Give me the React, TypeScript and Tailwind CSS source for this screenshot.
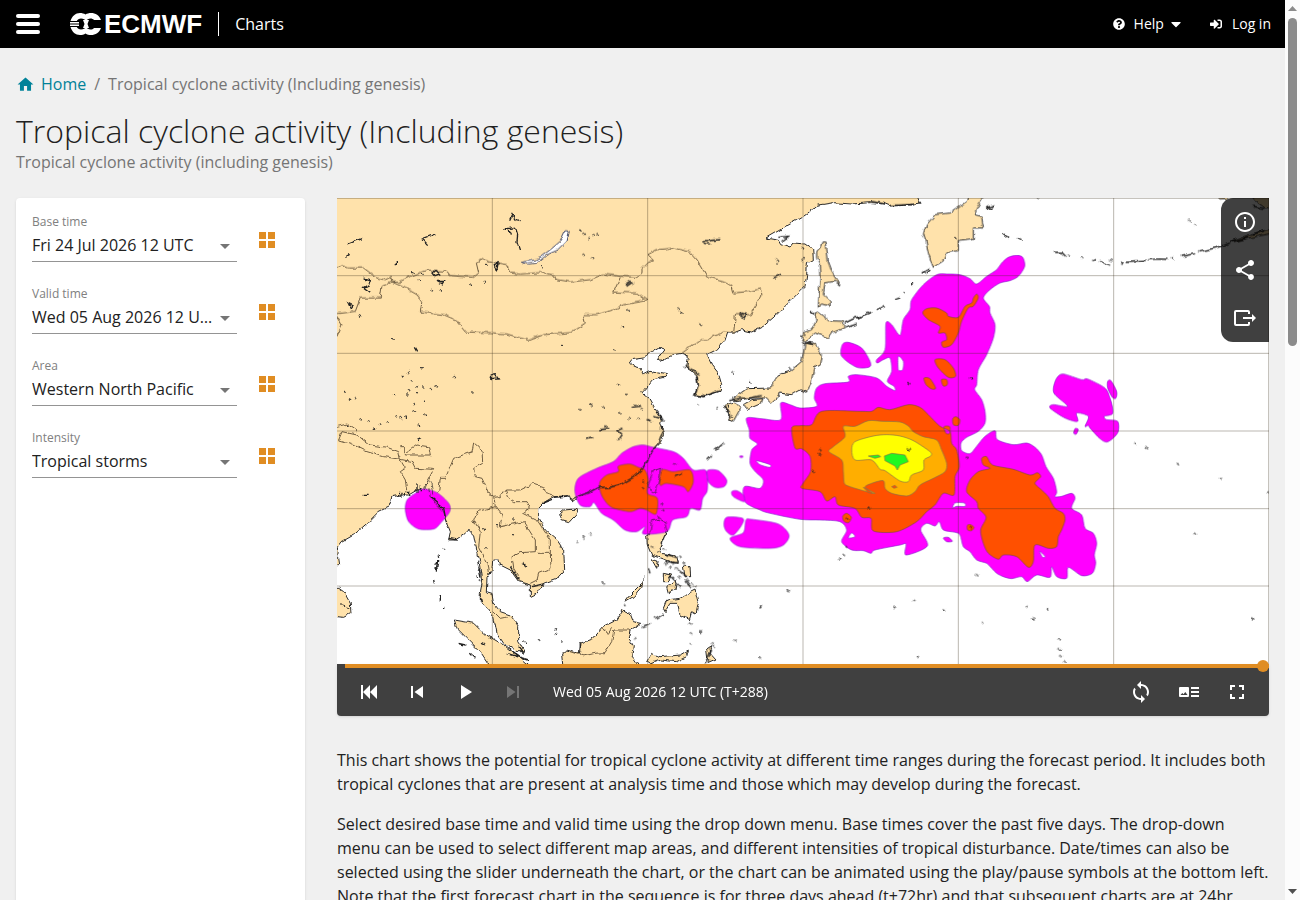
import { useState } from "react";
import { MdHome, MdLoop, MdFullscreen, MdOutlineInfo, MdPlayArrow, MdShare, MdSkipNext, MdSkipPrevious } from "react-icons/md";
import { FaCaretDown, FaQuestionCircle, FaSignInAlt } from "react-icons/fa";

type Field = {
  id: string;
  label: string;
  options: string[];
}

const fields: Field[] = [
  { id: "base-time", label: "Base time", options: ["Fri 24 Jul 2026 12 UTC"] },
  { id: "valid-time", label: "Valid time", options: ["Wed 05 Aug 2026 12 UTC"] },
  { id: "area", label: "Area", options: ["Western North Pacific"] },
  { id: "intensity", label: "Intensity", options: ["Tropical storms"] },
];

// the map is drawn on a 2796 x 1398 canvas, split in tiles that start at these points
const tiles = {
  nw: "translate(0 0)",
  n: "translate(699 0)",
  ne: "translate(1389 0)",
  e: "translate(2094 0)",
  sw: "translate(0 696)",
  s: "translate(699 696)",
  se: "translate(1389 696)",
  fe: "translate(2094 696)",
};

const mainland =
  "M-30 -30H1732L1750 15 1700 22 1660 24 1640 16 1600 14 1545 18 1490 14 1440 22 1404 52 1339 90 1287 120 1324 127 1331 140 1359 150 1371 135 1404 138 1427 155 1429 185 1411 195 1409 230 1404 265 1389 280 1359 310 1319 350 1279 385 1244 402 1214 395 1189 405 1169 405 1161 430 1139 455 1109 470 1124 500 1144 525 1154 560 1149 580 1099 595 1074 590 1084 560 1079 530 1049 510 1054 475 1034 466 1009 470 969 490 961 485 984 455 969 445 944 460 919 480 884 485 877 495 889 505 909 510 919 530 939 520 989 530 984 538 949 545 924 575 914 585 939 605 959 640 974 660 971 680 984 700 969 736 949 756 929 796 909 821 879 841 849 861 789 876 759 881 719 901 705 912 697 893 650 896 625 911 605 931 605 961 625 996 660 1026 680 1056 683 1116 660 1141 620 1156 600 1186 580 1196 580 1161 545 1151 520 1116 490 1101 485 1086 467 1086 465 1116 450 1141 448 1181 465 1186 470 1216 490 1241 520 1251 545 1286 545 1331 565 1361 540 1361 500 1336 480 1306 470 1256 450 1231 430 1211 430 1186 437 1146 430 1096 415 1036 410 1011 395 996 385 1006 355 1026 335 1026 340 1001 330 976 320 946 290 911 275 881 265 871 240 876 215 891 190 891 165 896 155 926 125 941 90 976 50 1011 15 1031 5 1046 2 1080 5 1100 -30 1112Z";

const land = [
  { at: tiles.ne, d: "M50 160L60 150 66 132 78 132 85 190 100 230 120 262 105 250 75 255 70 290 90 310 90 325 65 318 55 325 60 240 58 200 50 180ZM45 345L55 342 90 368 130 370 132 390 95 405 85 420 45 405 20 430 8 425 8 405 35 395 48 370ZM370 105L380 80 405 50 450 45 500 10 510 -20H560L530 30 525 50 545 55 550 90 520 90 520 125 475 130 475 158 440 165 435 185 400 208 395 195 385 165 378 130Z" },
  { at: tiles.n, d: "M705 435H735L754 470 749 500 732 510 722 560 709 583 690 575 665 590 628 585 622 600 605 615 590 600 540 600 500 608 485 605 530 572 600 570 625 530 660 520 695 490 700 470ZM520 620L545 605 575 602 570 618 530 635ZM465 620L495 612 512 630 490 670 475 665 478 640 460 630Z" },
  { at: tiles.e, d: "M640 -20H740V25L690 30 670 15ZM585 130L620 118 650 108 720 90V105L640 120 600 130ZM540 -10L555 3 575 2 590 -10Z" },
  { at: tiles.s, d: "M230 320L240 312 245 272 265 268 285 275 290 300 285 315 270 350 275 370 320 378 325 400 300 395 245 375 232 345ZM245 388L265 395 260 415ZM280 430L305 435 290 455 280 455ZM290 470L320 450 315 480 295 488ZM340 408L360 410 362 440 345 440ZM280 535L290 510 330 505 355 490 375 480 385 520 378 552 365 545 358 570 330 555 322 520 300 520 285 545ZM165 515L180 495 215 460 225 440 215 470 190 500ZM-25 675L-10 660 25 670 30 640 70 625 100 590 140 570 160 540 180 550 190 575 215 580 180 600 175 625 190 650 185 680 215 720H-20ZM230 695L245 670 270 680 330 675 355 660 350 680 320 695 270 690 240 702ZM410 660L425 650 420 670 438 690 415 700Z" },
  { at: tiles.sw, d: "M352 570L410 580 440 610 500 645 545 680 590 720H465L455 702 430 665 390 625 360 595ZM668 250L680 240 705 238 720 238 723 248 695 278 675 272ZM-20 475H5L20 485 40 520 42 550 20 562 -20 558Z" },
];

// outlines that stay visible through the shaded areas
const outlines = [
  { at: tiles.s, d: "M235 165L250 120 275 112 270 140 255 190 235 175ZM230 320L240 312 245 272 265 268 285 275 290 300 285 315 270 350" },
  { at: tiles.sw, d: "M275 175L280 200 295 220 320 245 330 280M262 178L272 150 285 160 290 190" },
];

// shaded areas: rings of points, drawn as smooth closed curves
const magenta = [
  { at: tiles.ne, d: "M410 230L440 228 480 230 510 242 530 258 560 235 590 215 605 195 625 178 650 172 668 178 674 205 655 235 630 248 600 255 570 275 550 300 568 325 570 345 585 380 580 420 560 470 535 515 530 560 524 575 545 605 555 640 555 675 535 700 500 718 483 735 485 758 510 767 530 745 555 715 585 698 592 725 640 740 680 735 705 748 725 771 738 806 760 841 770 881 765 896 785 895 815 886 825 901 815 931 845 951 855 991 880 1006 890 1036 883 1071 887 1096 877 1126 845 1133 805 1108 800 1141 770 1136 755 1106 750 1138 710 1131 682 1151 665 1136 635 1142 610 1136 590 1126 575 1111 560 1096 530 1086 510 1061 490 1046 480 1011 465 1003 430 996 418 971 405 984 380 976 362 996 382 1044 318 1071 318 1038 300 1041 225 1056 213 1066 190 1058 155 1056 125 1031 140 996 120 971 60 966 0 964 -90 946 -120 936 -165 912 -167 866 -120 871 -110 846 -135 820 -150 796 -145 756 -128 738 -150 721 -152 696 -160 660 -115 662 -58 665 -58 615 -30 620 0 630 50 625 43 600 50 570 75 557 145 552 145 535 170 530 230 540 260 565 285 578 282 565 262 550 275 520 270 480 250 485 232 495 230 485 255 455 258 375 275 380 300 412 310 365 330 335 335 305 370 260ZM295 475L295 515 308 515 310 490ZM458 930L465 915 493 915 495 925 470 925ZM145 1020L155 1005 165 1016ZM-130 788L-90 800 -92 808 -120 800ZM719 1060L735 1075 728 1078ZM127 440L145 433 185 450 210 490 208 507 170 508 125 475ZM430 1020L445 1018 457 1030 440 1031Z" },
  { at: tiles.e, d: "M65 540L85 528 140 545 158 543 210 570 225 600 232 625 232 648 208 655 215 665 248 670 250 700 235 720 215 732 195 722 165 690 160 682 150 685 160 655 125 645 128 670 90 660 45 630 55 620 98 625 60 590 55 570ZM218 550L228 548 245 580 243 600 232 598 218 570ZM120 692L130 694 124 708 116 706Z" },
  { at: tiles.s, d: "M15 185L25 145 80 115 130 95 155 70 190 50 220 45 250 52 310 65 340 85 370 120 408 122 412 180 398 205 390 240 362 235 350 260 308 270 290 305 220 312 225 290 200 305 165 300 130 270 95 250 72 218 60 230 30 225ZM470 262L518 265 515 285 490 315 470 305 462 285ZM528 270L545 268 625 282 657 315 640 345 600 355 510 350 480 325 520 308ZM412 122L445 122 470 150 462 170 435 172 415 155ZM485 185L500 182 520 195 522 215 490 200ZM510 78L518 78 518 82 510 82Z" },
  { at: tiles.sw, d: "M205 240L210 210 235 190 260 177 300 188 335 220 338 245 310 280 290 297 245 297 215 275Z" },
];

const red = [
  { at: tiles.ne, d: "M-25 690L0 683 35 680 65 640 180 640 215 640 235 628 270 635 325 620 360 628 385 650 420 685 450 700 455 736 470 756 478 806 465 836 462 891 430 886 405 921 380 941 350 971 290 1001 220 999 213 961 185 958 165 931 115 921 105 896 80 909 60 881 5 871 10 855 32 820 30 775 5 752 -15 750ZM368 345L380 332 410 330 440 345 445 355 475 358 495 325 515 315 520 300 530 288 535 300 520 325 505 330 485 370 475 405 455 440 430 448 425 432 440 425 435 405 415 405 420 385 385 365ZM405 485L435 485 460 510 467 535 445 538 415 510ZM372 540L390 542 407 570 395 573 378 560ZM424 545L440 545 442 560 430 564ZM458 662L468 656 480 666 475 682 460 680ZM432 686L449 686 449 706 438 706ZM128 955L140 946 154 958 146 974 132 970ZM502 982L512 980 522 988 515 998 503 996Z" },
  { at: tiles.se, d: "M545 85L560 80 578 105 640 118 690 135 712 128 722 140 705 160 725 180 745 200 765 235 790 250 795 270 785 300 775 320 770 350 745 355 705 345 700 395 685 412 650 380 610 375 595 388 565 370 550 340 542 300 558 262 535 235 530 215 500 185 510 150 535 125 570 115 550 105Z" },
  { at: tiles.s, d: "M90 155L110 135 145 125 145 108 180 102 205 112 225 120 235 150 232 190 262 205 258 252 230 240 210 235 180 245 125 232 100 205 90 180ZM270 165L275 120 310 125 360 120 370 155 355 185 340 170 290 160Z" },
];

const borders = [
  { at: tiles.nw, d: "M0 213L15 203 35 210 80 210 120 240 145 245 160 238 165 252 185 253 220 235 270 216 330 220 340 233 410 238 425 225 418 195 440 183 470 193 510 200 520 225 550 228 610 224 650 235 660 245 700 252 760 245 800 228 850 235 900 238 915 225 915 210 935 190 950 185 932 170 960 155 1010 150 1060 162 1080 185 1110 235 1160 250 1185 265 1190 285 1240 280 1270 272 1275 290 1240 350 1195 350 1190 405M165 252L135 265 130 300 70 300 55 340 0 347M0 355L15 380 0 415M165 252L205 270 240 290 255 310 250 342 320 350 355 365 385 402 460 404 510 408 575 427 620 410 700 404 745 375 738 350 780 350 830 335 860 320 930 308 900 285 830 282 850 238M1189 405L1160 402 1110 425 1090 425 1034 466" },
  { at: tiles.sw, d: "M-1 -10L30 -18 60 3M5 30L15 5 60 15 100 45 150 52 185 65 190 88 140 80 90 65 40 40ZM190 50L205 50 205 75 280 75 275 50 240 45 205 70M190 90L205 115 190 125 205 150 210 185M190 88L225 95 235 115 290 118 265 165M305 185L310 145 325 145 350 85 405 65 410 38 435 60 437 100 410 115 415 140 435 145 455 190 470 202 490 200 505 180 550 180 590 160 620 170 625 190 650 198M470 202L475 230 420 245 410 270 430 305 425 350 450 400 455 435M505 180L515 205 530 215 570 215 580 235 560 250 600 270 640 330 640 370 600 370M475 230L495 255 490 290 560 275 595 330 595 365 550 368 525 380 530 415 545 440M640 370L642 415 605 430 600 450 580 460M470 545L490 565 515 560" },
  { at: tiles.s, d: "M0 665L40 678 75 670 105 668 125 635 132 600 180 600M95 595L115 610 125 595" },
];

// heavier coast and lake marks
const marks = [
  { at: tiles.nw, d: "M498 93L515 90 520 110M505 95L535 88 542 110 540 130 548 155M518 65L525 50 535 65 548 68M30 138L75 121M255 122L292 108M258 125L272 140M80 240L100 245 95 260 80 268 100 283M288 225L297 217 308 228 294 233ZM35 315L48 322 42 330ZM472 200L483 195 478 220ZM458 535L475 530 484 543 465 545ZM300 250L320 250 315 258ZM178 192V202M235 448L242 460M25 178L35 172" },
  { at: tiles.n, d: "M397 128L420 128 448 125M400 135L420 138M165 262L185 248M168 266L188 252M515 345L530 350 525 360 513 355ZM610 240L635 228M625 118L655 115 635 130M185 628L210 625M90 695L115 692M140 698L160 690M230 665L245 668M250 655L275 662M372 592L400 596 430 585 448 578M380 535L385 565 375 590M347 505L375 520 388 530M475 608L510 600 540 600 575 592M460 625L475 640 480 662M262 640L280 668" },
  { at: tiles.ne, d: "M135 375L165 360 180 355M170 360L215 342M230 335L255 322M285 305L298 300M335 262L342 255M365 225L388 212M380 225L392 215M555 30L580 22 575 32ZM610 108L628 122M650 122L662 128M135 390L170 378M30 340L42 348M8 432L40 440M270 22L340 20M215 10L255 18" },
  { at: tiles.e, d: "M60 163H80L92 175M172 188L182 184M195 190L225 202M260 200L265 190M275 190L335 187M340 185L370 183 400 184M440 175L480 167M490 162L560 145 585 135M590 130L640 118M650 108L690 98M655 25L690 32" },
  { at: tiles.s, d: "M283 0L272 20 265 40 250 58 240 75 228 98 215 120 190 142 155 162 120 172 85 172 55 188 20 200 0 208M410 90L425 75M435 62L460 40M215 590L240 580M255 565L280 552M235 415L240 430M575 525L566 535M390 600V610M140 0L155 15 145 30M50 25L70 20M315 138L335 130M285 372L320 382M290 395L325 398M325 420L350 440M300 440L330 470M345 450L365 475M28 640V665M405 700L425 660" },
  { at: tiles.sw, d: "M185 185V196M195 188V200M205 188V200M215 192V182M240 160V185M250 170V184M285 205L320 235 325 260M335 325L360 330M302 390L298 425M290 450L292 460M310 495V515M320 530V540M422 395L432 440M430 500L435 520M240 32L252 26M80 196H92M620 218L645 208M650 202L695 198M520 410L545 450M555 400L570 408M585 470L625 460M365 640L385 645M400 670L415 685M510 670L575 690M525 665L560 690M545 650L560 670M432 640L442 645" },
];

const specks = [
  { at: tiles.nw, pts: [[225, 222], [255, 230], [245, 245], [450, 200], [400, 260], [440, 250], [615, 204], [672, 443], [165, 420], [215, 522], [195, 533], [252, 510], [220, 550], [352, 537], [405, 583], [238, 565], [258, 568], [280, 570], [298, 565], [215, 576], [240, 585], [170, 590], [210, 592], [24, 581], [38, 604], [53, 600], [232, 618], [262, 608], [205, 656], [232, 640], [175, 655], [190, 660], [70, 664], [95, 670], [128, 678], [152, 673], [245, 680], [30, 683], [265, 650], [110, 692], [283, 277], [308, 280], [68, 352]] },
  { at: tiles.n, pts: [[30, 97], [40, 107], [70, 110], [82, 108], [55, 120], [40, 170], [65, 182], [325, 332], [333, 343], [392, 380], [155, 388], [132, 458], [175, 337], [143, 558], [30, 633], [168, 590], [60, 620], [100, 628], [150, 645], [178, 660], [205, 662], [195, 620], [215, 630], [105, 685], [487, 523], [540, 553], [385, 618], [442, 630], [620, 185], [618, 196], [660, 510], [690, 415], [695, 150], [697, 188], [275, 690], [340, 510], [470, 625], [485, 655], [625, 595], [380, 540], [400, 592]] },
  { at: tiles.ne, pts: [[465, 120], [360, 15], [312, 285], [12, 180], [15, 410], [512, 540], [327, 555], [30, 435]] },
  { at: tiles.e, pts: [[462, 65], [478, 78], [140, 178], [228, 186], [410, 180], [8, 0], [100, 170]] },
  { at: tiles.s, pts: [[60, 310], [40, 322], [20, 335], [100, 460], [655, 480], [495, 632], [280, 355], [300, 375], [330, 380], [285, 400], [300, 410], [320, 415], [335, 430], [350, 450], [355, 465], [330, 470], [310, 400], [290, 395], [340, 400], [365, 460], [375, 470], [325, 440], [165, 525], [430, 650], [420, 660], [415, 690], [425, 640], [245, 350], [265, 365], [275, 220], [278, 240], [265, 260], [220, 155], [215, 175], [195, 625], [315, 100], [568, 685], [360, 580], [362, 610], [360, 640]] },
  { at: tiles.sw, pts: [[320, 355], [425, 420], [428, 450], [418, 440], [605, 630], [656, 610], [672, 637], [655, 598], [20, 530], [32, 535], [15, 520], [480, 285], [528, 268], [525, 312], [440, 298], [445, 355], [440, 640], [562, 635], [305, 380], [298, 400], [297, 415]] },
  { at: tiles.se, pts: [[60, 60], [58, 75], [40, 125], [140, 350], [120, 388], [130, 372], [342, 512], [280, 530], [433, 541], [545, 578], [352, 680], [500, 86], [325, 58], [205, 235], [530, 435], [680, 530], [699, 565], [140, 265], [512, 294]] },
  { at: tiles.fe, pts: [[332, 54], [557, 147], [699, 190], [298, 43], [35, 538], [70, 630], [73, 657], [75, 678], [90, 694], [653, 565], [428, 102], [478, 311]] },
];

const speckPath = (pts: number[][]) => pts.map(([x, y]) => `M${x - 3} ${y}l3 -2 4 3 -2 3`).join("");

// turns every ring of points into a closed curve that runs through them
const smooth = (d: string) =>
  d.split("M").slice(1).map((ring) => {
    const n = ring.match(/-?\d+/g)!.map(Number);
    const pts = n.filter((_, i) => i % 2 === 0).map((x, i) => [x, n[i * 2 + 1]]);
    const at = (i: number) => pts[(i + pts.length) % pts.length];
    return `M${pts[0]}` + pts.map((p, i) => {
      const [a, c, e] = [at(i - 1), at(i + 1), at(i + 2)];
      return `C${p[0] + (c[0] - a[0]) / 7} ${p[1] + (c[1] - a[1]) / 7} ${c[0] - (e[0] - p[0]) / 7} ${c[1] - (e[1] - p[1]) / 7} ${c[0]} ${c[1]}`;
    }).join("") + "Z";
  }).join("");

const CycloneMap = () => (
  <svg viewBox="0 0 2796 1398" className="block w-full bg-white" role="img" aria-label="Tropical cyclone activity, Western North Pacific">
    <defs>
      <filter id="rough" x="-60" y="-60" width="2916" height="1518" filterUnits="userSpaceOnUse" colorInterpolationFilters="sRGB">
        <feTurbulence type="fractalNoise" baseFrequency="0.05" numOctaves="2" seed="4" />
        <feDisplacementMap in="SourceGraphic" scale="14" xChannelSelector="R" yChannelSelector="G" />
      </filter>
    </defs>
    <g filter="url(#rough)">
      <g fill="#ffe2ab" stroke="#2b2b2b" strokeWidth="3">
        <path d={mainland} />
        {land.map((s, i) => <path key={i} transform={s.at} d={s.d} />)}
      </g>
      <path d="M553 193L600 185 640 155 670 130 685 98 697 100 690 130 665 155 630 170 600 195 575 198Z" fill="#fff" stroke="#444a66" strokeWidth="3" />
      <g fill="none" stroke="#6f5d42" strokeWidth="3">
        {borders.map((s, i) => <path key={i} transform={s.at} d={s.d} />)}
      </g>
    </g>
    <g strokeWidth="2" strokeLinejoin="round" fillRule="evenodd">
      <g fill="#ff00ff" stroke="#8a1fd0">
        {magenta.map((s, i) => <path key={i} transform={s.at} d={smooth(s.d)} />)}
      </g>
      <g fill="#ff5000" stroke="#7b4a46">
        {red.map((s, i) => <path key={i} transform={s.at} d={smooth(s.d)} />)}
      </g>
      <g transform={tiles.se} stroke="#85704a">
        <path fill="#ffae00" d={smooth("M130 -11L165 -11 205 -28 250 -26 300 -24 325 -12 340 5 370 20 410 30 425 60 440 100 435 125 400 145 360 165 345 185 320 198 275 190 255 175 250 152 215 160 195 172 225 190 200 185 150 170 133 160 130 125 125 90 87 65 100 50 135 20")} />
        <path fill="#ffff00" d={smooth("M155 60L165 35 220 18 260 14 300 18 340 32 390 65 392 78 372 90 370 120 335 135 325 155 300 153 255 122 240 118 215 90 165 90")} />
        <path fill="#20f820" d="M253 78L275 70 315 75 325 95 300 105 292 120 285 108 255 92ZM205 78L235 75 242 80 225 85Z" />
        <path fill="#ff5000" d="M275 170L285 166 291 172 282 175ZM190 172L202 178 218 190 205 188Z" />
      </g>
    </g>
    <g filter="url(#rough)" fill="none" stroke="#222">
      <g strokeWidth="2">
        {outlines.map((s, i) => <path key={i} transform={s.at} d={s.d} />)}
      </g>
      <g strokeWidth="4">
        {marks.map((s, i) => <path key={i} transform={s.at} d={s.d} />)}
      </g>
      <g strokeWidth="3">
        {specks.map((s, i) => <path key={i} transform={s.at} d={speckPath(s.pts)} />)}
      </g>
    </g>
    <path d="M466 0V1398M932 0V1398M1398 0V1398M1864 0V1398M2330 0V1398M0 233H2796M0 466H2796M0 699H2796M0 932H2796M0 1164H2796M0 1H2796M2795 0V1398" fill="none" stroke="#3c321e" strokeOpacity="0.35" strokeWidth="3" />
  </svg>
);

const Logo = () => (
  <a href="#" aria-label="ECMWF" className="flex items-center gap-0.5 text-white">
    <svg width="32" height="22" viewBox="0 0 32 22" aria-hidden="true">
      <path d="M10 0C12 0 14 .5 15.500 1.500 17 .5 19 0 21 0c4.500 0 8.500 2.500 10 7h-7C23 6 22 5.500 20.500 5.500c-2 0-3.500 1-4.500 2.500-1-1.500-2.500-2.500-5-2.500-2 0-3.500 1-4.200 2.500H.5C2 3 5.500 0 10 0z" fill="#fff" />
      <path d="M10 22c2 0 4-.5 5.500-1.500C17 21.500 19 22 21 22c4.500 0 8.500-2.500 10-7h-7c-1 1-2 1.500-3.500 1.500-2 0-3.500-1-4.500-2.500-1 1.500-2.500 2.500-5 2.500-2 0-3.500-1-4.200-2.500H.5C2 19 5.500 22 10 22z" fill="#fff" />
      <path d="M0 9h9v1.500H0zM0 11.500h9V13H0z" fill="#fff" />
      <path d="M13 7h6l-1.500 4 1.500 4h-6l1.500-4z" fill="#fff" />
    </svg>
    <span className="font-['Liberation_Sans',sans-serif] text-[26px] leading-8 font-bold">ECMWF</span>
  </a>
);

const Header = () => (
  <header className="flex h-12 items-center justify-between bg-black px-4 text-white">
    <div className="flex items-center">
      <button type="button" aria-label="Menu" className="mr-[30px] flex w-6 flex-col gap-1">
        <span className="h-1 rounded-xs bg-white" />
        <span className="h-1 rounded-xs bg-white" />
        <span className="h-1 rounded-xs bg-white" />
      </button>
      <Logo />
      <a href="#" className="ml-4 flex h-6 items-center border-l border-white pl-4 text-base">Charts</a>
    </div>
    <nav className="-mr-0.5 flex items-center gap-[26px] text-sm">
      <button type="button" className="flex items-center">
        <FaQuestionCircle size={12} />
        <span className="mr-1 ml-[9px]">Help</span>
        <FaCaretDown size={16} />
      </button>
      <a href="#" className="flex items-center gap-2.5">
        <FaSignInAlt size={12} />
        Log in
      </a>
    </nav>
  </header>
);

const SelectField = ({ field }: { field: Field }) => (
  <div className="flex h-12 items-start justify-between">
    <div className="relative w-[205px] border-b border-[#949494]">
      <label htmlFor={field.id} className="block text-xs leading-4 text-[#808080]">{field.label}</label>
      <select id={field.id} className="block h-[31px] w-full appearance-none overflow-hidden bg-transparent pr-5 pb-0.5 text-base text-ellipsis whitespace-nowrap text-[#212121] outline-none">
        {field.options.map((o) => <option key={o}>{o}</option>)}
      </select>
      <svg className="pointer-events-none absolute right-[7px] bottom-3" width="10" height="5" viewBox="0 0 10 5" aria-hidden="true">
        <path d="M0 0h10L5 5z" fill="#757575" />
      </svg>
    </div>
    <button type="button" aria-label={`Show all: ${field.label}`} className="mt-[18px] mr-3.5">
      <svg width="16" height="16" viewBox="0 0 16 16" fill="#e08d23" aria-hidden="true">
        <path d="M0 0h7v7H0zM9 0h7v7H9zM0 9h7v7H0zM9 9h7v7H9z" />
      </svg>
    </button>
  </div>
);

const MapTools = () => (
  <div className="absolute top-0 right-0 flex w-12 flex-col rounded-l-xl bg-black/75 text-white">
    <button type="button" aria-label="Information" className="flex h-12 items-center justify-center"><MdOutlineInfo size={24} /></button>
    <button type="button" aria-label="Share" className="flex h-12 items-center justify-center"><MdShare size={24} /></button>
    <button type="button" aria-label="Export" className="flex h-12 items-center justify-center">
      <svg width="24" height="24" viewBox="0 0 24 24" fill="none" stroke="#fff" strokeWidth="2" aria-hidden="true">
        <path d="M16 8V6q0-1-1-1H3q-1 0-1 1v12q0 1 1 1h12q1 0 1-1v-2M10 12h10" />
        <path d="M19 8l4 4-4 4z" fill="#fff" stroke="none" />
      </svg>
    </button>
  </div>
);

const Player = () => {
  const [step, setStep] = useState(9);

  return (
    <div className="relative rounded-b bg-[#404040] text-white shadow">
      <div className="flex pl-2">
        <input
          type="range"
          aria-label="Forecast step"
          min={0}
          max={9}
          value={step}
          onChange={(e) => setStep(Number(e.target.value))}
          className="block h-1 w-full appearance-none bg-[#e08d23] [&::-webkit-slider-thumb]:size-3 [&::-webkit-slider-thumb]:appearance-none [&::-webkit-slider-thumb]:rounded-full [&::-webkit-slider-thumb]:bg-[#e08d23]"
        />
      </div>
      <div className="flex h-12 items-center justify-between px-2">
        <div className="flex items-center">
          <button type="button" aria-label="First" onClick={() => setStep(0)} className="flex w-12 justify-center">
            <svg width="24" height="24" viewBox="0 0 24 24" fill="#fff" aria-hidden="true">
              <path d="M4 5h2v14H4zM13 5v14l-7-7zM20 5v14l-7-7z" />
            </svg>
          </button>
          <button type="button" aria-label="Previous" onClick={() => setStep(Math.max(0, step - 1))} className="flex w-12 justify-center"><MdSkipPrevious size={24} /></button>
          <button type="button" aria-label="Play" className="flex w-12 justify-center"><MdPlayArrow size={24} /></button>
          <button type="button" aria-label="Next" disabled={step === 9} className="flex w-12 justify-center text-[#757575]"><MdSkipNext size={24} /></button>
          <span className="ml-4 text-sm">Wed 05 Aug 2026 12 UTC (T+288)</span>
        </div>
        <div className="flex items-center">
          <button type="button" aria-label="Loop" className="flex w-12 justify-center"><MdLoop size={24} /></button>
          <button type="button" aria-label="Legend" className="flex w-12 justify-center">
            <svg width="24" height="24" viewBox="0 0 24 24" fill="#fff" aria-hidden="true">
              <path fillRule="evenodd" d="M3 7h8q1 0 1 1v8q0 1-1 1H3q-1 0-1-1V8q0-1 1-1zM3.500 15h7l-2.200-3-1.800 2.200-1.200-1.200z" />
              <path d="M14 7h8v2h-8zM14 11h8v2h-8zM14 15h8v2h-8z" />
            </svg>
          </button>
          <button type="button" aria-label="Fullscreen" className="flex w-12 justify-center"><MdFullscreen size={24} /></button>
        </div>
      </div>
    </div>
  );
};

// window scroll bar
const ScrollBar = () => (
  <div className="flex w-[15px] shrink-0 flex-col items-center justify-between bg-[#fcfcfc] py-1.5">
    <div className="flex flex-col items-center gap-[7px]">
      <svg width="9" height="5" viewBox="0 0 9 5" aria-hidden="true"><path d="M0 5h9L4.500 0z" fill="#8b8b8b" /></svg>
      <div className="h-[328px] w-[9px] rounded-full bg-[#8b8b8b]" />
    </div>
    <svg width="9" height="5" viewBox="0 0 9 5" aria-hidden="true"><path d="M0 0h9L4.500 5z" fill="#505050" /></svg>
  </div>
);

export default function App() {
  return (
    <div className="flex h-screen overflow-hidden bg-[#f0f0f0] font-['Open_Sans','Noto_Sans',sans-serif] text-[#212121]">
      <div className="min-w-0 flex-1 overflow-hidden">
        <Header />
        <main className="px-4 pt-6">
          <nav aria-label="Breadcrumb" className="flex items-center text-base text-[#757575]">
            <a href="#" className="flex items-center gap-1.5 text-[#008299]">
              <MdHome size={19} />
              Home
            </a>
            <span className="mx-2">/</span>
            <span>Tropical cyclone activity (Including genesis)</span>
          </nav>
          <h1 className="mt-4 text-[32px] leading-[38px] font-light">Tropical cyclone activity (Including genesis)</h1>
          <p className="text-base text-[#757575]">Tropical cyclone activity (including genesis)</p>

          <div className="mt-6 flex gap-8">
            <aside className="flex w-[289px] shrink-0 flex-col gap-6 rounded bg-white p-4 shadow-sm">
              {fields.map((field) => <SelectField key={field.id} field={field} />)}
            </aside>
            <div className="min-w-0 flex-1">
              <div className="relative">
                <CycloneMap />
                <MapTools />
              </div>
              <Player />
              <div className="mt-8 flex flex-col gap-4 text-base">
                <p>
                  This chart shows the potential for tropical cyclone activity at different time ranges during the forecast period. It includes both tropical cyclones that are present at analysis time and those which may develop during the forecast.
                </p>
                <p>
                  Select desired base time and valid time using the drop down menu. Base times cover the past five days. The drop-down menu can be used to select different map areas, and different intensities of tropical disturbance. Date/times can also be selected using the slider underneath the chart, or the chart can be animated using the play/pause symbols at the bottom left. Note that the first forecast chart in the sequence is for three days ahead (t+72hr) and that subsequent charts are at 24hr
                </p>
              </div>
            </div>
          </div>
        </main>
      </div>
      <ScrollBar />
    </div>
  );
}
